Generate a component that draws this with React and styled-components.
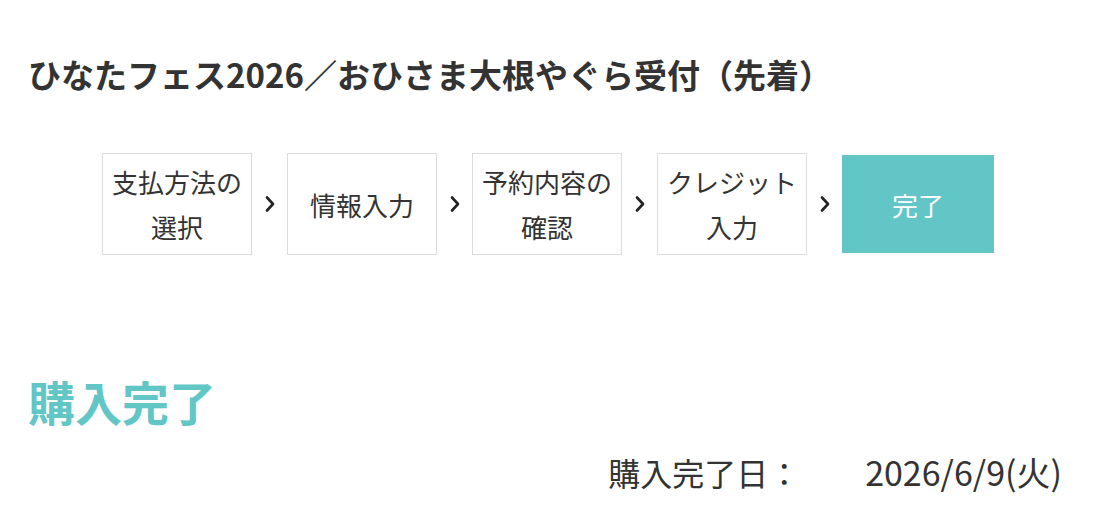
import React from "react";
import styled, { createGlobalStyle } from "styled-components";

const GlobalStyle = createGlobalStyle`
  html, body {
    margin: 0;
    padding: 0;
    background: #ffffff;
  }
  body {
    font-family: "Noto Sans CJK JP", "Noto Sans", sans-serif;
    color: #333333;
  }
`;

const Page = styled.div`
  width: 1096px;
  height: 509px;
  box-sizing: border-box;
  padding: 51px 34px 0 28px;
  overflow: hidden;
`;

const Title = styled.h1`
  margin: 0;
  font-size: 33px;
  line-height: 46px;
  font-weight: 700;
  color: #333333;
`;

const Steps = styled.ol`
  list-style: none;
  margin: 56px -34px 0 -28px;
  padding: 0;
  display: flex;
  justify-content: center;
  align-items: center;
`;

const StepItem = styled.li`
  display: flex;
  align-items: center;
`;

const StepBox = styled.div`
  box-sizing: border-box;
  width: ${(p) => (p.$active ? "152px" : "150px")};
  height: ${(p) => (p.$active ? "98px" : "102px")};
  border: ${(p) => (p.$active ? "none" : "1px solid #dcdcdc")};
  background: ${(p) => (p.$active ? "#62c6c7" : "#ffffff")};
  color: ${(p) => (p.$active ? "#ffffff" : "#333333")};
  display: flex;
  align-items: center;
  justify-content: center;
  text-align: center;
  font-size: 26px;
  line-height: 45px;
  padding: 0 6px;
`;

const Arrow = styled.span`
  width: 35px;
  display: flex;
  justify-content: center;
  color: #222222;
`;

const Done = styled.h2`
  margin: 116px 0 0;
  font-size: 47px;
  line-height: 60px;
  font-weight: 700;
  color: #62c6c7;
`;

const DateRow = styled.dl`
  margin: 19px 0 0;
  display: flex;
  justify-content: flex-end;
  align-items: baseline;
  font-size: 32px;
  line-height: 44px;
  color: #333333;
`;

const DateLabel = styled.dt`
  margin: 0;
  width: 257px;
`;

const DateValue = styled.dd`
  margin: 0;
  font-size: 34px;
`;

const Chevron = () => (
  <svg width="10" height="18" viewBox="0 0 10 18" aria-hidden="true">
    <path
      d="M2 2.5 L8 9 L2 15.5"
      fill="none"
      stroke="currentColor"
      strokeWidth="2.6"
      strokeLinecap="round"
      strokeLinejoin="round"
    />
  </svg>
);

const steps = [
  { label: ["支払方法の", "選択"] },
  { label: ["情報入力"] },
  { label: ["予約内容の", "確認"] },
  { label: ["クレジット", "入力"] },
  { label: ["完了"], active: true },
];

export default function App() {
  return (
    <>
      <GlobalStyle />
      <Page>
        <Title>ひなたフェス2026／おひさま大根やぐら受付（先着）</Title>
        <Steps>
          {steps.map((s, i) => (
            <StepItem key={i}>
              <StepBox $active={s.active}>
                <span>
                  {s.label.map((l, j) => (
                    <React.Fragment key={j}>
                      {j > 0 && <br />}
                      {l}
                    </React.Fragment>
                  ))}
                </span>
              </StepBox>
              {i < steps.length - 1 && (
                <Arrow>
                  <Chevron />
                </Arrow>
              )}
            </StepItem>
          ))}
        </Steps>
        <Done>購入完了</Done>
        <DateRow>
          <DateLabel>購入完了日：</DateLabel>
          <DateValue>2026/6/9(火)</DateValue>
        </DateRow>
      </Page>
    </>
  );
}
